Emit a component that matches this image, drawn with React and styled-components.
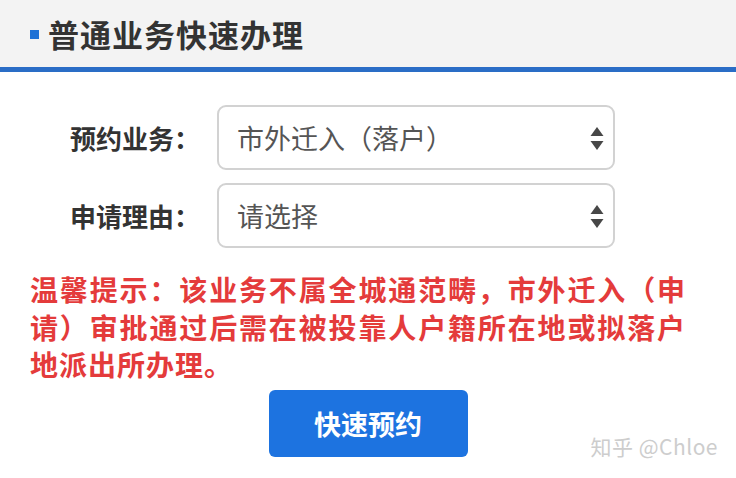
import React from 'react';
import styled, { createGlobalStyle } from 'styled-components';

const GlobalStyle = createGlobalStyle`
  html, body {
    margin: 0;
    padding: 0;
    background: #ffffff;
  }
  body {
    font-family: "Noto Sans CJK SC", "Noto Sans", sans-serif;
  }
`;

const Page = styled.div`
  position: relative;
  width: 736px;
  height: 478px;
  background: #ffffff;
  overflow: hidden;
`;

const Header = styled.div`
  display: flex;
  align-items: center;
  gap: 9px;
  height: 67px;
  padding-left: 30px;
  background: #f3f3f3;
  border-bottom: 5px solid #2a6dc6;
  box-sizing: content-box;
`;

const Marker = styled.span`
  width: 9px;
  height: 9px;
  background: #1f72d6;
  margin-top: 2px;
`;

const Title = styled.h1`
  margin: 0;
  font-size: 31px;
  font-weight: 700;
  color: #333333;
  letter-spacing: 1px;
  line-height: 1;
`;

const Form = styled.div`
  display: grid;
  grid-template-columns: 132px 398px;
  column-gap: 15px;
  row-gap: 13px;
  padding: 33px 0 0 70px;
`;

const Label = styled.label`
  display: flex;
  align-items: center;
  font-size: 26px;
  font-weight: 700;
  color: #333333;
  white-space: nowrap;
`;

const SelectBox = styled.div`
  display: flex;
  align-items: center;
  justify-content: space-between;
  height: 65px;
  box-sizing: border-box;
  padding: 0 9px 0 18px;
  border: 2px solid #d2d2d2;
  border-radius: 9px;
  background: #ffffff;
  font-size: 27px;
  color: #555555;
`;

const Notice = styled.p`
  margin: 23px 0 0;
  padding: 0 50px 0 30px;
  font-size: 28px;
  font-weight: 700;
  line-height: 37.5px;
  letter-spacing: 1px;
  color: #e43b3b;
  text-align: justify;
`;

const Actions = styled.div`
  display: flex;
  justify-content: center;
  margin-top: 6px;
`;

const Button = styled.button`
  width: 199px;
  height: 67px;
  border: none;
  border-radius: 6px;
  background: #1d73e0;
  color: #ffffff;
  font-family: "Noto Sans CJK SC", sans-serif;
  font-size: 27px;
  font-weight: 700;
  cursor: pointer;
`;

const Watermark = styled.span`
  position: absolute;
  right: 18px;
  bottom: 17px;
  font-family: "Noto Sans CJK SC", "Noto Sans", sans-serif;
  font-size: 21px;
  color: #cdcdcd;
  letter-spacing: 0.5px;
`;

const Arrows = () => (
  <svg width="14" height="26" viewBox="0 0 14 26">
    <polygon points="7,2 13.5,11 0.5,11" fill="#474747" />
    <polygon points="0.5,16 13.5,16 7,25" fill="#474747" />
  </svg>
);

const Select = ({ value }) => (
  <SelectBox>
    <span>{value}</span>
    <Arrows />
  </SelectBox>
);

const App = () => (
  <Page>
    <GlobalStyle />
    <Header>
      <Marker />
      <Title>普通业务快速办理</Title>
    </Header>
    <Form>
      <Label>预约业务：</Label>
      <Select value="市外迁入（落户）" />
      <Label>申请理由：</Label>
      <Select value="请选择" />
    </Form>
    <Notice>
      温馨提示：该业务不属全城通范畴，市外迁入（申请）审批通过后需在被投靠人户籍所在地或拟落户地派出所办理。
    </Notice>
    <Actions>
      <Button>快速预约</Button>
    </Actions>
    <Watermark>知乎 @Chloe</Watermark>
  </Page>
);

export default App;
